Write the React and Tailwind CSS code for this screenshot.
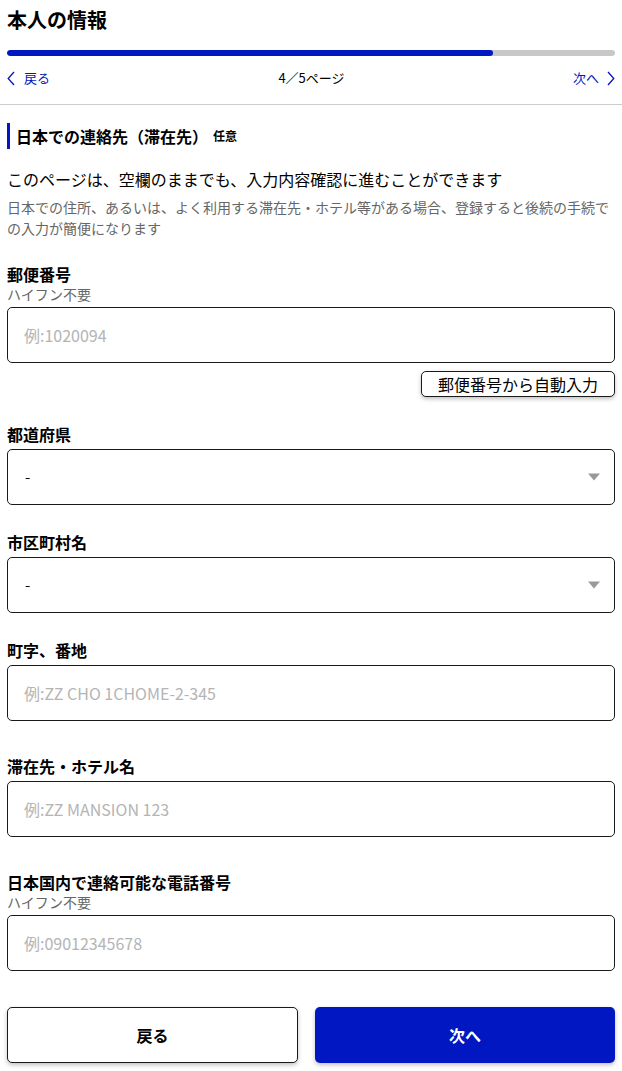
function Label({ children, hint }) {
  return (
    <div className="mb-[4px]">
      <div className="text-[16px] font-bold leading-[22px] text-black">{children}</div>
      {hint && <div className="text-[14px] leading-[18px] text-[#666]">{hint}</div>}
    </div>
  );
}

function TextField({ placeholder }) {
  return (
    <input
      type="text"
      placeholder={placeholder}
      className="w-full h-[56px] px-4 rounded-[5px] border border-[#1a1a1a] text-[16px] text-black placeholder:text-[#b4b4b4] outline-none"
    />
  );
}

function SelectField() {
  return (
    <div className="relative">
      <select className="w-full h-[56px] pl-[17px] pr-10 rounded-[5px] border border-[#1a1a1a] bg-white text-[15px] text-black appearance-none outline-none">
        <option>-</option>
      </select>
      {/* arrow */}
      <div className="pointer-events-none absolute right-[15px] top-1/2 -translate-y-1/2 w-0 h-0 border-l-[6px] border-r-[6px] border-t-[7px] border-l-transparent border-r-transparent border-t-[#999]"></div>
    </div>
  );
}

function Chevron({ dir }) {
  return (
    <svg width="8" height="15" viewBox="0 0 8 15" fill="none" stroke="currentColor" strokeWidth="1.3">
      {dir === 'left' ? <path d="M7 1 L1.2 7.5 L7 14" /> : <path d="M1 1 L6.8 7.5 L1 14" />}
    </svg>
  );
}

export default function App() {
  return (
    <div className="w-[622px] bg-white font-['Noto_Sans_CJK_JP','Noto_Sans',sans-serif] text-black">
      {/* Header */}
      <div className="px-[7px] pt-[6px]">
        <h1 className="text-[20px] font-bold leading-[28px]">本人の情報</h1>
        <div className="mt-[16px] h-[6px] w-full rounded-full bg-[#c8c8c8] overflow-hidden">
          <div className="h-full w-[80%] rounded-full bg-[#0017c1]"></div>
        </div>
        <div className="mt-[10px] flex items-center justify-between h-[24px] text-[13px]">
          <button className="flex items-center text-[#0017c1]">
            <Chevron dir="left" />
            <span className="ml-[9px]">戻る</span>
          </button>
          <span className="text-black">4／5ページ</span>
          <button className="flex items-center text-[#0017c1]">
            <span className="mr-[8px]">次へ</span>
            <Chevron dir="right" />
          </button>
        </div>
      </div>
      <div className="mt-[14px] border-t border-[#ccc]"></div>

      {/* Body */}
      <div className="px-[7px] pt-[18px] pb-[8px]">
        <div className="flex items-center border-l-[3px] border-[#0017c1] pl-[6px] h-[26px]">
          <span className="text-[16px] font-bold">日本での連絡先（滞在先）</span>
          <span className="ml-[5px] text-[12px] font-bold">任意</span>
        </div>
        <p className="mt-[18px] text-[16px] leading-[24px]">このページは、空欄のままでも、入力内容確認に進むことができます</p>
        <p className="mt-[6px] text-[14px] leading-[21px] text-[#666]">
          日本での住所、あるいは、よく利用する滞在先・ホテル等がある場合、登録すると後続の手続での入力が簡便になります
        </p>

        <div className="mt-[24px]">
          <Label hint="ハイフン不要">郵便番号</Label>
          <TextField placeholder="例:1020094" />
          <div className="mt-[8px] flex justify-end">
            <button className="h-[26px] px-4 rounded-[5px] border border-[#1a1a1a] bg-white text-[16px] leading-none shadow-[0_2px_4px_rgba(0,0,0,0.25)]">
              郵便番号から自動入力
            </button>
          </div>
        </div>

        <div className="mt-[26px]">
          <Label>都道府県</Label>
          <SelectField />
        </div>

        <div className="mt-[26px]">
          <Label>市区町村名</Label>
          <SelectField />
        </div>

        <div className="mt-[26px]">
          <Label>町字、番地</Label>
          <TextField placeholder="例:ZZ CHO 1CHOME-2-345" />
        </div>

        <div className="mt-[34px]">
          <Label>滞在先・ホテル名</Label>
          <TextField placeholder="例:ZZ MANSION 123" />
        </div>

        <div className="mt-[34px]">
          <Label hint="ハイフン不要">日本国内で連絡可能な電話番号</Label>
          <TextField placeholder="例:09012345678" />
        </div>

        <div className="mt-[36px] flex gap-[17px]">
          <button className="w-[291px] h-[56px] rounded-[5px] border border-[#1a1a1a] bg-white text-[16px] font-bold shadow-[0_2px_4px_rgba(0,0,0,0.25)]">
            戻る
          </button>
          <button className="flex-1 h-[56px] rounded-[5px] bg-[#0017c1] text-white text-[16px] font-bold shadow-[0_2px_4px_rgba(0,0,0,0.25)]">
            次へ
          </button>
        </div>
      </div>
    </div>
  );
}
